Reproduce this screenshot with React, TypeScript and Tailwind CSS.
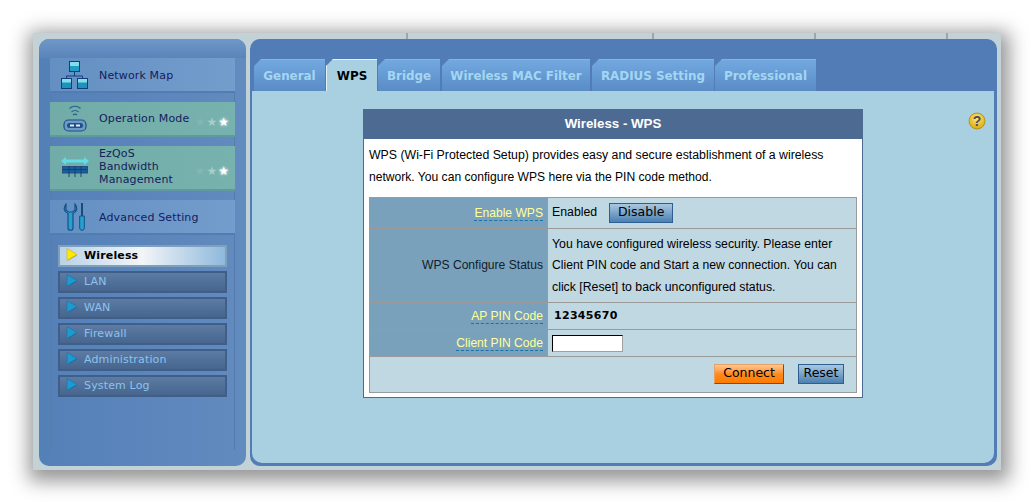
import React from "react";

const dejavu = "[font-family:'DejaVu_Sans',Verdana,sans-serif]";

function NetIcon() {
  return (
    <svg width="30" height="30" viewBox="0 0 30 30">
      <g stroke="#123f78" strokeWidth="1" fill="none">
        <path d="M14.500 11.500v4.500M6.500 19v-3h16v3" />
        <rect x="9.500" y="1.500" width="10" height="10" fill="#1f9fc6" />
        <rect x="1.500" y="18.500" width="10" height="10" fill="#1c93bd" />
        <rect x="17.500" y="18.500" width="10" height="10" fill="#1c93bd" />
      </g>
      <path d="M10 2h9v4h-9zM2 19h9v3.500h-9zM18 19h9v3.500h-9z" fill="#86dce8" />
    </svg>
  );
}

function RouterIcon() {
  return (
    <svg width="30" height="30" viewBox="0 0 30 30">
      <path d="M9.500 4.500a8 8 0 0 1 11 0M11.500 8a5 5 0 0 1 7 0M13 11a3 3 0 0 1 4 0" stroke="#245f92" strokeWidth="1.100" fill="none" />
      <rect x="4" y="16" width="22" height="11" rx="4.500" fill="#6a9cc6" stroke="#1f4f86" strokeWidth="1.200" />
      <rect x="7" y="19" width="16" height="5" rx="2.500" fill="#214f86" />
      <rect x="10" y="20.500" width="4" height="2" fill="#e2eef5" />
      <rect x="16" y="20.500" width="4" height="2" fill="#e2eef5" />
    </svg>
  );
}

function QosIcon() {
  return (
    <svg width="30" height="24" viewBox="0 0 30 24">
      <path d="M1 5l5-4v2.500h18V1l5 4-5 4V6.500H6V9z" fill="#62dce8" />
      <rect x="2.500" y="10.500" width="25" height="6.500" fill="#14609e" stroke="#2a4d83" />
      <path d="M9 10v11M15 10v11M21 10v11M3 13.500h24" stroke="#173a68" strokeWidth="0.900" />
    </svg>
  );
}

function WrenchIcon() {
  return (
    <svg width="24" height="28" viewBox="0 0 24 28">
      <path d="M3 1C0 5 1 9 5 10.500V25c0 3 5 3 5 0V10.500C14 9 15 5 12 1v6L9.500 9H5.500L3 7z" fill="#27a0cc" stroke="#14508a" strokeWidth="1.200" />
      <rect x="18" y="0" width="2" height="13" fill="#1a4a78" />
      <path d="M16.700 13h4.600v12a2.300 2.300 0 0 1-4.600 0z" fill="#27a0cc" stroke="#14508a" strokeWidth="1" />
    </svg>
  );
}

function Stars() {
  return (
    <div className="flex items-center gap-[1px] text-[12px] leading-none mt-[6px] [font-family:'DejaVu_Sans',sans-serif]">
      <span className="text-[#82b8b4]">★</span>
      <span className="text-[#a5cfcb]">★</span>
      <span className="text-white [text-shadow:0_0_3px_#ffffff]">★</span>
    </div>
  );
}

function MenuItem({
  icon,
  label,
  teal,
  tall,
  stars,
  labelClass,
}: {
  icon: React.ReactNode;
  label: React.ReactNode;
  teal?: boolean;
  tall?: boolean;
  stars?: boolean;
  labelClass?: string;
}) {
  return (
    <div
      className={`flex items-center ${tall ? "h-[45px]" : "h-[35px]"} border-b-2 ${
        teal
          ? "bg-gradient-to-r from-[#72aca8] to-[#78b2ae] border-[#5f9a9f]"
          : "bg-gradient-to-r from-[#648fc2] to-[#739dcc] border-[#527db0]"
      }`}
    >
      <div className="w-[49px] flex justify-center shrink-0 pl-[1px]">{icon}</div>
      <div className={`flex-1 text-[11px] leading-[13px] tracking-[0.15px] text-[#14205c] ${dejavu} ${labelClass ?? ""}`}>{label}</div>
      {stars && <div className="pr-[6px]"><Stars /></div>}
    </div>
  );
}

function Arrow({ active }: { active?: boolean }) {
  return (
    <svg width="12" height="14" viewBox="0 0 12 14" className="shrink-0 mb-[3px]">
      <path d="M2 2.500l9 5-9 5z" fill="#1c3f6a" opacity="0.400" />
      <path d="M1 0.500l10 6-10 6z" fill={active ? "#ffe900" : "#1b9bd0"} stroke={active ? "#d8b400" : "#1b76ae"} strokeWidth="0.700" />
    </svg>
  );
}

function SubItem({ label, active }: { label: string; active?: boolean }) {
  return (
    <div
      className={`h-[22px] flex items-center pl-[6px] gap-[6px] border-2 text-[11px] tracking-[0.15px] ${dejavu} ${
        active
          ? "bg-gradient-to-r from-[#b8d2e8] via-[#f2f5f8] to-[#8fb9dc] border-[#7f9fbb] text-black font-bold"
          : "bg-gradient-to-b from-[#5d7ba3] to-[#46668f] border-[#3f5f88] text-[#8cc2ee]"
      }`}
    >
      <Arrow active={active} />
      <span className="pt-[1px]">{label}</span>
    </div>
  );
}

function Tab({ label, active, w }: { label: string; active?: boolean; w: string }) {
  return (
    <div
      className={`${w} h-[32px] flex items-center justify-center pt-[3px] text-[11.9px] font-bold border-t ${dejavu} [clip-path:polygon(7px_0,100%_0,100%_100%,0_100%,0_7px)] ${
        active
          ? "bg-[#a9d0e0] text-black border-[#e4f2f4] border-l"
          : "bg-gradient-to-b from-[#72a8e0] to-[#5a8cc6] text-[#a4d6f2] border-[#84b4e4]"
      }`}
    >
      {label}
    </div>
  );
}

function Label({ children, plain }: { children: string; plain?: boolean }) {
  return (
    <div className="bg-[#7aa1bb] w-[178px] shrink-0 flex items-center justify-end pr-[4px] border-r border-[#9a9a9a] text-[12.1px]">
      <span className={plain ? "text-[#10202c]" : "text-[#ffff99] border-b border-dashed border-[#1872a8] leading-[14px]"}>
        {children}
      </span>
    </div>
  );
}

function Btn({ children, w }: { children: string; w: string }) {
  return (
    <button className={`${w} h-[20px] border border-[#2f5f90] bg-gradient-to-b from-[#a8c8e2] to-[#4b80b0] text-[12.5px] text-black leading-none [font-family:'DejaVu_Sans',sans-serif]`}>
      {children}
    </button>
  );
}

export default function App() {
  return (
    <div className="w-[1034px] h-[503px] bg-white pt-[33px] pl-[33px] overflow-hidden font-['Liberation_Sans',Arial,sans-serif]">
      <div className="relative w-[968px] h-[437px] bg-[#c2d2d7] shadow-[2px_5px_18px_6px_rgba(0,0,0,0.42)] flex gap-[4px] pl-[6px] pr-[4px] pt-[6px] pb-[4px]">
        <span className="absolute top-0 left-[373px] w-[2px] h-[6px] bg-[#9aa8ae]" />
        <span className="absolute top-0 left-[619px] w-[2px] h-[6px] bg-[#9aa8ae]" />
        <span className="absolute top-0 left-[781px] w-[2px] h-[6px] bg-[#9aa8ae]" />
        <span className="absolute top-0 left-[913px] w-[2px] h-[6px] bg-[#9aa8ae]" />

        {/* Sidebar */}
        <aside className="w-[207px] shrink-0 rounded-[10px] bg-gradient-to-r from-[#5480b8] to-[#628bbf] flex flex-col">
          <div className="h-[19px] shrink-0 rounded-t-[10px] bg-gradient-to-b from-[#6f98c8] to-[#5a85ba]" />
          <div className="mx-[11px] h-[392px] border-x border-[#567cae]">
            <div className="flex flex-col gap-[9px] -mx-px">
              <MenuItem icon={<NetIcon />} label="Network Map" labelClass="pt-[2px]" />
              <MenuItem icon={<RouterIcon />} label="Operation Mode" teal stars />
              <MenuItem
                icon={<QosIcon />}
                label={<>EzQoS<br />Bandwidth<br />Management</>}
                labelClass="pb-[2px]"
                teal
                tall
                stars
              />
              <MenuItem icon={<WrenchIcon />} label="Advanced Setting" labelClass="pt-[2px]" />
            </div>
            <div className="flex flex-col gap-[4px] mt-[10px] px-[7px]">
              <SubItem label="Wireless" active />
              <SubItem label="LAN" />
              <SubItem label="WAN" />
              <SubItem label="Firewall" />
              <SubItem label="Administration" />
              <SubItem label="System Log" />
            </div>
          </div>
        </aside>

        {/* Main */}
        <main className="flex-1 rounded-[10px] bg-[#527cb5] pl-[2px] pr-[3px] pb-[3px] flex flex-col">
          <div className="flex items-end h-[52px] pl-[2px] shrink-0">
            <Tab label="General" w="w-[71px] mr-[1px]" />
            <Tab label="WPS" active w="w-[51px] mr-[1px]" />
            <Tab label="Bridge" w="w-[62px] mr-[2px]" />
            <Tab label="Wireless MAC Filter" w="w-[148px] mr-[2px]" />
            <Tab label="RADIUS Setting" w="w-[122px] mr-[1px]" />
            <Tab label="Professional" w="w-[101px]" />
          </div>
          <div className="relative flex-1 bg-[#a9d0e0] rounded-b-[10px] pt-[18px] pl-[111px]">
            <svg width="18" height="18" viewBox="0 0 18 18" className="absolute top-[21px] right-[8px]">
              <defs>
                <radialGradient id="gold" cx="50%" cy="35%" r="65%">
                  <stop offset="0%" stopColor="#ffe680" />
                  <stop offset="100%" stopColor="#dba90c" />
                </radialGradient>
              </defs>
              <circle cx="9" cy="9" r="8" fill="url(#gold)" stroke="#b08a0c" strokeWidth="0.800" />
              <text x="9" y="14" textAnchor="middle" fontSize="14" fontWeight="700" fill="#4a4a55" fontFamily="Liberation Sans">?</text>
            </svg>

            <section className="w-[500px] h-[289px] bg-white border border-[#4d6b92] border-t-0 flex flex-col">
              <div className="h-[30px] -mx-px bg-[#4d6b92] text-white text-[13.3px] font-bold flex items-center justify-center shrink-0">
                Wireless - WPS
              </div>
              <p className="text-[12.3px] leading-[22px] text-black px-[5px] pt-[5px] h-[58px] shrink-0">
                WPS (Wi-Fi Protected Setup) provides easy and secure establishment of a wireless
                <br />
                <span className="text-[12.1px]">network. You can configure WPS here via the PIN code method.</span>
              </p>
              <div className="mx-[5px] border border-[#9a9a9a] text-[12.3px] text-black bg-[#c0d8e2] flex flex-col divide-y divide-[#9a9a9a]">
                <div className="flex h-[31px]">
                  <Label>Enable WPS</Label>
                  <div className="flex items-center pl-[4px] pb-[1px] gap-[12px]">
                    <span>Enabled</span>
                    <Btn w="w-[64px]">Disable</Btn>
                  </div>
                </div>
                <div className="flex h-[74px]">
                  <Label plain>WPS Configure Status</Label>
                  <div className="pl-[4px] flex items-center leading-[21.500px]">
                    <div className="pt-[1px]">
                      You have configured wireless security. Please enter
                      <br />
                      <span className="text-[12.15px]">Client PIN code and Start a new connection. You can</span>
                      <br />
                      click [Reset] to back unconfigured status.
                    </div>
                  </div>
                </div>
                <div className="flex h-[27px]">
                  <Label>AP PIN Code</Label>
                  <div className={`flex items-center pl-[6px] pt-[1px] text-[11px] font-bold tracking-[0.3px] ${dejavu}`}>12345670</div>
                </div>
                <div className="flex h-[27px]">
                  <Label>Client PIN Code</Label>
                  <div className="flex items-center pl-[4px]">
                    <input className="w-[71px] h-[17px] bg-white border border-[#a0a0a0] border-t-black border-l-black" />
                  </div>
                </div>
                <div className="flex items-center justify-end h-[35px] gap-[14px] pr-[12px] pb-[2px]">
                  <button className="w-[70px] h-[20px] border border-[#555] border-t-[#e8a060] border-l-[#e8a060] bg-gradient-to-b from-[#ffc890] via-[#ff8a18] to-[#ff7a00] text-[12.5px] text-black leading-none [font-family:'DejaVu_Sans',sans-serif]">
                    Connect
                  </button>
                  <Btn w="w-[46px]">Reset</Btn>
                </div>
              </div>
            </section>
          </div>
        </main>
      </div>
    </div>
  );
}
